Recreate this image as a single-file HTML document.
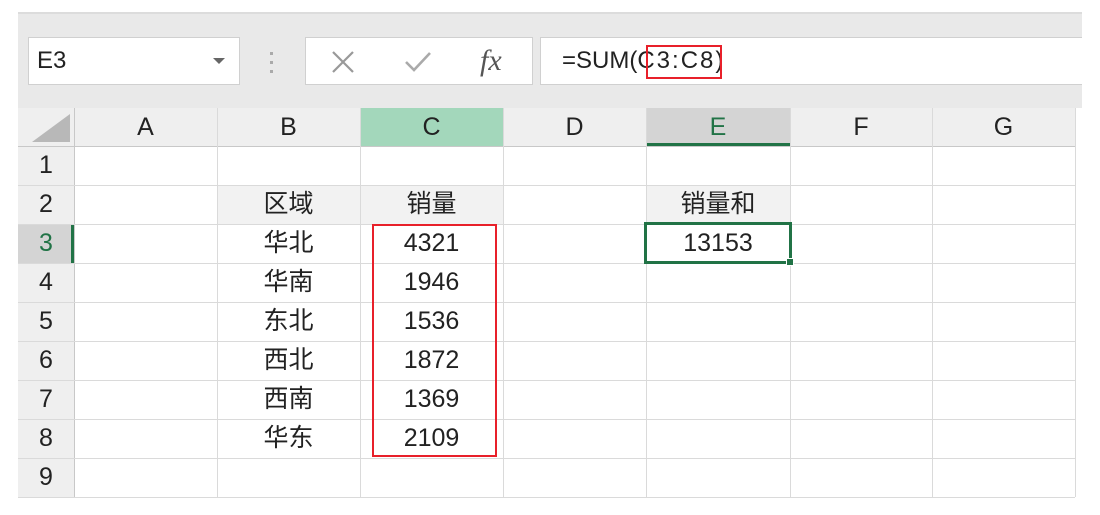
<!DOCTYPE html>
<html><head><meta charset="utf-8"><style>
*{margin:0;padding:0;box-sizing:border-box}
body{width:1100px;height:515px;background:#fff;position:relative;overflow:hidden;font-family:"Liberation Sans","Noto Sans CJK SC",sans-serif;color:#222}
.a{position:absolute}
.t{position:absolute;text-align:center;font-size:25px;line-height:39px}
.vl{position:absolute;width:1px;background:#dadada}
.hl{position:absolute;height:1px;background:#dadada}
</style></head><body>
<div class="a" style="left:18px;top:12px;width:1064px;height:2px;background:#dcdcdc"></div>
<div class="a" style="left:18px;top:14px;width:1064px;height:94px;background:#e9e9e9"></div>
<div class="a" style="left:28px;top:37px;width:212px;height:48px;background:#fff;border:1px solid #d0d0d0"></div>
<div class="a" style="left:37px;top:46px;font-size:24px;line-height:30px">E3</div>
<div class="a" style="left:213px;top:58px;width:0;height:0;border-left:6px solid transparent;border-right:6px solid transparent;border-top:6px solid #666"></div>
<div class="a" style="left:270px;top:52px;width:3px;height:3px;background:#aaa"></div>
<div class="a" style="left:270px;top:61px;width:3px;height:3px;background:#aaa"></div>
<div class="a" style="left:270px;top:70px;width:3px;height:3px;background:#aaa"></div>
<div class="a" style="left:305px;top:37px;width:228px;height:48px;background:#fff;border:1px solid #d0d0d0"></div>
<svg class="a" style="left:330px;top:49px" width="26" height="26"><path d="M3 3L23 23M23 3L3 23" stroke="#999" stroke-width="2.2"/></svg>
<svg class="a" style="left:403px;top:49px" width="30" height="26"><path d="M3 13L11 21L27 4" stroke="#aaa" stroke-width="2.6" fill="none"/></svg>
<div class="a" style="left:480px;top:44px;font-family:'Liberation Serif',serif;font-style:italic;font-size:30px;color:#555">fx</div>
<div class="a" style="left:540px;top:37px;width:542px;height:48px;background:#fff;border:1px solid #d0d0d0;border-right:none"></div>
<div class="a" style="left:562px;top:46px;font-size:24px;line-height:30px">=SUM(<span style="letter-spacing:2px">C3:C8</span>)</div>
<div class="a" style="left:646px;top:45px;width:76px;height:34px;border:2px solid #e8202a"></div>
<!-- headers -->
<div class="a" style="left:18px;top:108px;width:1057px;height:38px;background:#efefef"></div>
<div class="a" style="left:18px;top:146px;width:56px;height:351px;background:#efefef"></div>
<div class="a" style="left:360px;top:108px;width:143px;height:38px;background:#a3d7bb"></div>
<div class="a" style="left:646px;top:108px;width:144px;height:38px;background:#d4d4d4;border-bottom:3px solid #217346"></div>
<div class="a" style="left:18px;top:224px;width:56px;height:39px;background:#d4d4d4;border-right:3px solid #217346"></div>
<svg class="a" style="left:28px;top:112px" width="44" height="32"><path d="M42 2L42 30L4 30Z" fill="#b8b8b8"/></svg>
<div class="hl" style="left:18px;top:146px;width:1057px;background:#c8c8c8"></div>
<div class="vl" style="left:74px;top:108px;height:389px;background:#c8c8c8"></div>
<!-- grid -->
<div class="vl" style="left:217px;top:108px;height:389px"></div>
<div class="vl" style="left:360px;top:108px;height:389px"></div>
<div class="vl" style="left:503px;top:108px;height:389px"></div>
<div class="vl" style="left:646px;top:108px;height:389px"></div>
<div class="vl" style="left:790px;top:108px;height:389px"></div>
<div class="vl" style="left:932px;top:108px;height:389px"></div>
<div class="vl" style="left:1075px;top:108px;height:389px"></div>
<div class="hl" style="left:18px;top:185px;width:1057px"></div>
<div class="hl" style="left:18px;top:224px;width:1057px"></div>
<div class="hl" style="left:18px;top:263px;width:1057px"></div>
<div class="hl" style="left:18px;top:302px;width:1057px"></div>
<div class="hl" style="left:18px;top:341px;width:1057px"></div>
<div class="hl" style="left:18px;top:380px;width:1057px"></div>
<div class="hl" style="left:18px;top:419px;width:1057px"></div>
<div class="hl" style="left:18px;top:458px;width:1057px"></div>
<div class="hl" style="left:18px;top:497px;width:1057px"></div>
<div class="a" style="left:218px;top:186px;width:142px;height:38px;background:#f2f2f2"></div>
<div class="a" style="left:361px;top:186px;width:142px;height:38px;background:#f2f2f2"></div>
<div class="a" style="left:647px;top:186px;width:143px;height:38px;background:#f2f2f2"></div>
<!-- col letters -->
<div class="t" style="left:74px;top:108px;width:143px">A</div>
<div class="t" style="left:217px;top:108px;width:143px">B</div>
<div class="t" style="left:360px;top:108px;width:143px">C</div>
<div class="t" style="left:503px;top:108px;width:143px">D</div>
<div class="t" style="left:646px;top:108px;width:144px;color:#217346">E</div>
<div class="t" style="left:790px;top:108px;width:142px">F</div>
<div class="t" style="left:932px;top:108px;width:143px">G</div>
<!-- row numbers -->
<div class="t" style="left:18px;top:146px;width:56px">1</div>
<div class="t" style="left:18px;top:185px;width:56px">2</div>
<div class="t" style="left:18px;top:224px;width:56px;color:#217346">3</div>
<div class="t" style="left:18px;top:263px;width:56px">4</div>
<div class="t" style="left:18px;top:302px;width:56px">5</div>
<div class="t" style="left:18px;top:341px;width:56px">6</div>
<div class="t" style="left:18px;top:380px;width:56px">7</div>
<div class="t" style="left:18px;top:419px;width:56px">8</div>
<div class="t" style="left:18px;top:458px;width:56px">9</div>
<!-- data -->
<div class="t" style="left:217px;top:185px;width:143px">区域</div>
<div class="t" style="left:217px;top:224px;width:143px">华北</div>
<div class="t" style="left:217px;top:263px;width:143px">华南</div>
<div class="t" style="left:217px;top:302px;width:143px">东北</div>
<div class="t" style="left:217px;top:341px;width:143px">西北</div>
<div class="t" style="left:217px;top:380px;width:143px">西南</div>
<div class="t" style="left:217px;top:419px;width:143px">华东</div>
<div class="t" style="left:360px;top:185px;width:143px">销量</div>
<div class="t" style="left:360px;top:224px;width:143px">4321</div>
<div class="t" style="left:360px;top:263px;width:143px">1946</div>
<div class="t" style="left:360px;top:302px;width:143px">1536</div>
<div class="t" style="left:360px;top:341px;width:143px">1872</div>
<div class="t" style="left:360px;top:380px;width:143px">1369</div>
<div class="t" style="left:360px;top:419px;width:143px">2109</div>
<div class="t" style="left:646px;top:185px;width:144px">销量和</div>
<div class="t" style="left:646px;top:224px;width:144px">13153</div>
<div class="a" style="left:372px;top:224px;width:125px;height:233px;border:2px solid #e8202a"></div>
<div class="a" style="left:644px;top:222px;width:148px;height:42px;border:3px solid #217346"></div>
<div class="a" style="left:786px;top:258px;width:8px;height:8px;background:#217346;border:1px solid #fff"></div>
</body></html>
